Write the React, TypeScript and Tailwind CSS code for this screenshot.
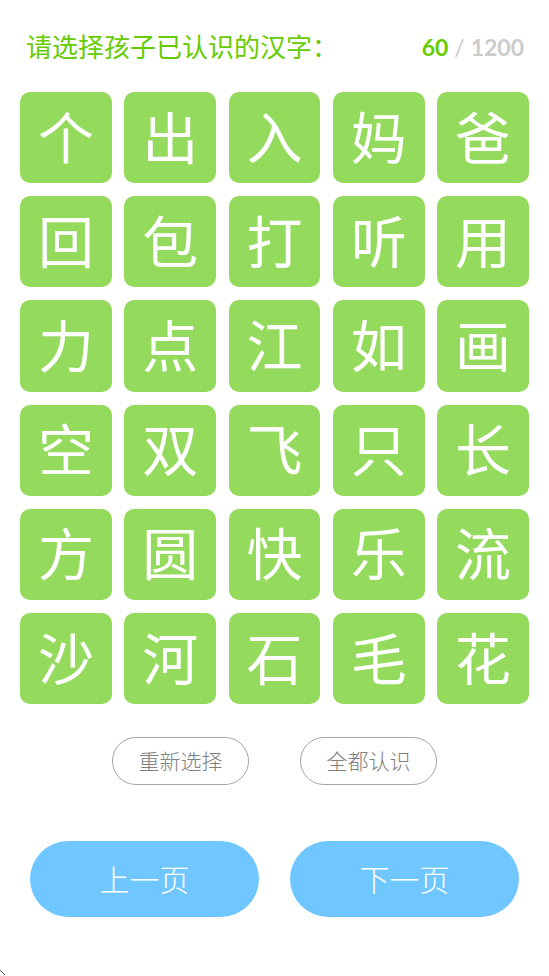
const chars = [
	"个", "出", "入", "妈", "爸",
	"回", "包", "打", "听", "用",
	"力", "点", "江", "如", "画",
	"空", "双", "飞", "只", "长",
	"方", "圆", "快", "乐", "流",
	"沙", "河", "石", "毛", "花",
];

const cjk = "font-['Lato','Noto_Sans_CJK_SC',sans-serif]";

export default function App() {
	return (
		<div className={`relative h-[976px] w-[549px] overflow-hidden bg-white ${cjk}`}>
			{/* Header */}
			<div className="flex h-[92px] items-start justify-between pl-[26px] pr-[25px] pt-[30px]">
				<h1 className="text-[26px] leading-[34px] font-normal text-[#66cc00]">
					请选择孩子已认识的汉字：
				</h1>
				<p className="text-[23px] leading-[34px] font-bold text-[#cccccc]">
					<span className="text-[#66cc00]">60</span>
					<span className="font-normal"> / </span>
					1200
				</p>
			</div>

			{/* Characters */}
			<div className="grid grid-cols-5 gap-x-[12.5px] gap-y-[12.9px] px-5">
				{chars.map((c) => (
					<div
						key={c}
						className="flex h-[91.3px] items-center justify-center rounded-[10px] bg-[#94da5c] text-[56px] leading-none font-normal text-white"
					>
						{c}
					</div>
				))}
			</div>

			{/* Small actions */}
			<div className="mt-[33px] flex justify-center gap-[51px]">
				<button className="h-[48px] w-[137px] rounded-full border border-[#a6a6a6] text-[21px] font-light text-[#808080]">
					重新选择
				</button>
				<button className="h-[48px] w-[137px] rounded-full border border-[#a6a6a6] text-[21px] font-light text-[#808080]">
					全都认识
				</button>
			</div>

			{/* Paging */}
			<div className="mt-[56px] flex gap-[31px] pl-[30px]">
				<button className="h-[76px] w-[229px] rounded-full bg-[#70c7ff] text-[30px] font-light text-white">
					上一页
				</button>
				<button className="h-[76px] w-[229px] rounded-full bg-[#70c7ff] text-[30px] font-light text-white">
					下一页
				</button>
			</div>

			{/* speck in the bottom corner of the screenshot */}
			<svg className="absolute bottom-0 left-0 h-[6px] w-[6px]" viewBox="0 0 6 6">
				<path d="M0 0L5 5" stroke="#555" strokeWidth="1" fill="none" />
			</svg>
		</div>
	);
}
